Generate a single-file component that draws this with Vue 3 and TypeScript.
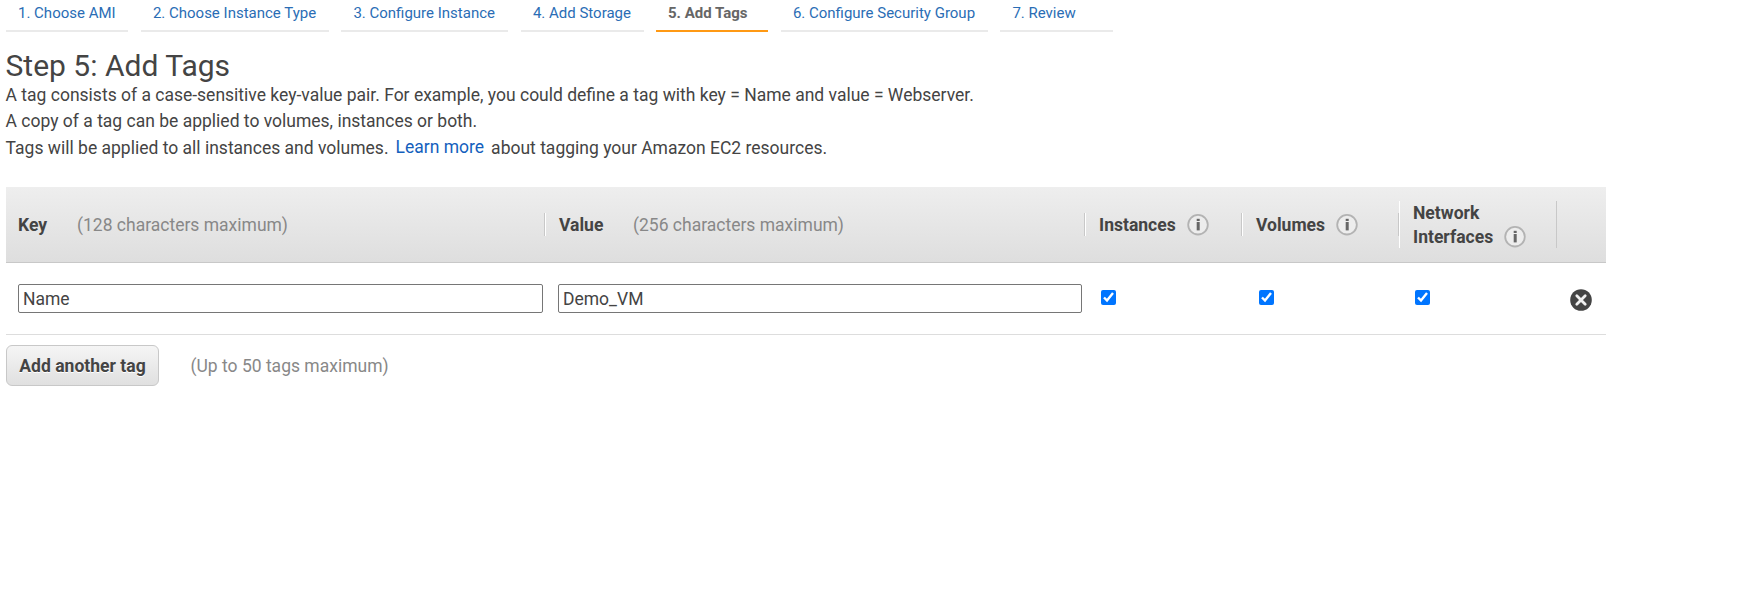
<script setup lang="ts">
import { ref } from 'vue'

interface Step { label: string; width: number; active?: boolean }
const steps: Step[] = [
  { label: '1. Choose AMI', width: 122 },
  { label: '2. Choose Instance Type', width: 188 },
  { label: '3. Configure Instance', width: 167 },
  { label: '4. Add Storage', width: 123 },
  { label: '5. Add Tags', width: 112, active: true },
  { label: '6. Configure Security Group', width: 207 },
  { label: '7. Review', width: 113 },
]
const tagKey = ref('Name')
const tagValue = ref('Demo_VM')
const targets = ref([
  { lines: ['Instances'], checked: true },
  { lines: ['Volumes'], checked: true },
  { lines: ['Network', 'Interfaces'], checked: true },
])
</script>

<template>
  <main class="page">
    <nav class="steps">
      <a v-for="s in steps" :key="s.label" class="step" :class="{ active: s.active }" :style="{ width: s.width + 'px' }">{{ s.label }}</a>
    </nav>
    <h1>Step 5: Add Tags</h1>
    <div class="intro">
      <p>A tag consists of a case-sensitive key-value pair. For example, you could define a tag with key = Name and value = Webserver.</p>
      <p>A copy of a tag can be applied to volumes, instances or both.</p>
      <p>Tags will be applied to all instances and volumes. <a class="learn">Learn more</a> about tagging your Amazon EC2 resources.</p>
    </div>
    <section class="table">
      <div class="row head">
        <div class="cell first"><b class="key">Key</b><span class="hint">(128 characters maximum)</span></div>
        <div class="cell"><b class="val">Value</b><span class="hint">(256 characters maximum)</span></div>
        <div v-for="t in targets" :key="t.lines[0]" class="cell" :class="{ tall: t.lines.length > 1 }">
          <b><span v-for="l in t.lines" :key="l" class="line">{{ l }}</span></b>
          <svg class="info" viewBox="0 0 22 22">
            <circle cx="11" cy="10.7" r="9.8" fill="#ededed" stroke="#b3b3b3" stroke-width="1.8" />
            <rect x="9.7" y="4.8" width="3" height="2.2" fill="#666" />
            <rect x="9.7" y="8" width="3" height="8.4" fill="#666" />
          </svg>
        </div>
        <div class="cell last"></div>
      </div>
      <div class="row body">
        <div class="field"><input v-model="tagKey" type="text" class="text" /></div>
        <div class="field second"><input v-model="tagValue" type="text" class="text" /></div>
        <div v-for="t in targets" :key="t.lines[0]" class="check"><input v-model="t.checked" type="checkbox" /></div>
        <div class="remove">
          <svg viewBox="0 0 22 22">
            <circle cx="11" cy="11" r="10.8" fill="#444" />
            <path d="M6.8 6.8 15.2 15.2M15.2 6.8 6.8 15.2" stroke="#f0f0f0" stroke-width="2.8" stroke-linecap="round" />
          </svg>
        </div>
      </div>
    </section>
    <footer class="actions">
      <button type="button">Add another tag</button>
      <span class="hint">(Up to 50 tags maximum)</span>
    </footer>
  </main>
</template>

<style>
body { margin: 0; background: #fff; }
</style>

<style scoped>
* { box-sizing: border-box; }
.page { width: 1606px; padding-left: 6px; font-family: Roboto, "Liberation Sans", sans-serif; font-size: 17.5px; color: #444; }
.steps { display: flex; height: 32px; gap: 12.5px; }
.step { flex: none; height: 32px; padding-left: 12.4px; border-bottom: 2px solid #eaeaea; font-size: 15px; line-height: 26px; color: #2a6db5; white-space: nowrap; }
.step:first-child { padding-left: 12px; }
.step.active { padding-left: 12px; font-weight: 700; color: #666; border-color: #ff9914; }
h1 { margin: 17px 0 0; font-size: 30px; font-weight: 400; line-height: 34px; text-indent: -0.5px; }
.intro { display: flow-root; height: 104px; }
.intro p { margin: 0; line-height: 26.4px; white-space: nowrap; text-indent: -0.4px; }
.intro p:first-child { margin-top: -1px; }
.learn { color: #145fbd; margin: 0 2.7px; position: relative; top: -1px; }
.row { display: grid; grid-template-columns: 539px 540px 157px 157px 158px 49px; }
.head { height: 76px; align-items: center; background: linear-gradient(#eee, #dedede); border-bottom: 1px solid #c8c8c8; }
.cell { height: 23px; display: flex; align-items: center; padding-left: 13px; border-left: 1px solid #fff; border-right: 1px solid #c8c8c8; line-height: 24px; }
.cell.first { border-left: 0; padding-left: 12px; }
.cell.last { border: 0; }
.cell.tall { height: 47px; align-items: flex-end; }
.cell.tall b { margin-bottom: -1px; }
.cell b { font-weight: 700; font-size: 17.55px; }
.line { display: block; }
.key { width: 59px; }
.val { width: 74px; }
.hint { color: #888; }
.info { width: 22px; height: 22px; margin-left: 11px; }
.body { height: 72px; border-bottom: 1px solid #ddd; padding-top: 21px; align-items: start; }
.field { padding-left: 12px; }
.field.second { padding-left: 13px; }
.text { display: block; width: 525px; height: 29px; margin: 0; padding: 1px 4px; border: 1px solid #767676; border-radius: 2px; font: inherit; color: #444; outline: 0; }
.second .text { width: 524px; }
.check { padding: 6px 0 0 16px; }
.check:nth-child(4) { padding-left: 17px; }
.check input { display: block; width: 15px; height: 15px; margin: 0; }
.remove { padding: 5px 0 0 13px; }
.remove svg { display: block; width: 22px; height: 22px; }
.actions { display: flex; align-items: center; margin-top: 10px; gap: 31.5px; }
button { width: 153px; height: 41px; padding: 0; border: 1px solid #c8c8c8; border-radius: 6px; background: linear-gradient(#f5f5f5, #e0e0e0); font: 700 17.55px Roboto, sans-serif; color: #444; text-shadow: 0 1px #fff; }
</style>
